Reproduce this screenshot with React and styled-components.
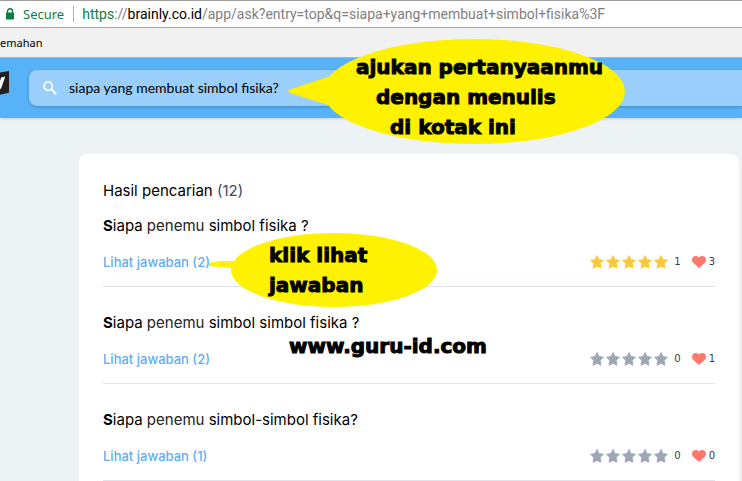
import styled, { createGlobalStyle } from 'styled-components';
import { useState } from 'react';

const results = [
	{ id: 1, subject: 'simbol fisika ?', answers: 2, rated: true, votes: 1, thanks: 3 },
	{ id: 2, subject: 'simbol simbol fisika ?', answers: 2, rated: false, votes: 0, thanks: 1 },
	{ id: 3, subject: 'simbol-simbol fisika?', answers: 1, rated: false, votes: 0, thanks: 0 },
]

function LockIcon() {
	return (
		<svg width="10" height="12" viewBox="0 0 10 12" aria-hidden="true">
			<path d="M2.5 5V3.2a2.5 2.4 0 0 1 5 0V5" fill="none" stroke="#0b8043" strokeWidth="1.4" />
			<rect x="1" y="4.5" width="8" height="7" rx="0.6" fill="#0b8043" />
		</svg>
	)
}

function SearchIcon() {
	return (
		<svg width="14" height="14" viewBox="0 0 14 14" aria-hidden="true">
			<circle cx="5.2" cy="5.2" r="4.2" fill="none" stroke="#fff" strokeWidth="1.7" />
			<path d="M8.3 8.3L13.2 13.2" stroke="#fff" strokeWidth="2" />
		</svg>
	)
}

function Logo() {
	return (
		<svg width="9" height="25" viewBox="0 0 9 25" aria-hidden="true">
			<path d="M0 2.6L9 1V22.8L0 24.8Z" fill="#231f20" />
			<path d="M0 11L1.2 7.4L5.2 6.6L2 16Q1.2 19 0 19.6Z" fill="#fff" />
		</svg>
	)
}

function Star() {
	return (
		<svg width="14" height="14" viewBox="0 0 14 14" aria-hidden="true">
			<path
				d="M7 0.6L9 4.6L13.4 5.2L10.2 8.4L11 13.2L7 11.4L3 13.2L3.8 8.4L0.6 5.2L5 4.6Z"
				fill="currentColor" stroke="currentColor" strokeWidth="0.9" strokeLinejoin="round"
			/>
		</svg>
	)
}

function Heart() {
	return (
		<svg width="14" height="12" viewBox="0 0 14 12" aria-hidden="true">
			<path
				d="M7 12L1.2 6.8C-0.3 5.3-0.3 2.4 1 1.1C2.7-0.5 5.5-0.3 7 1.5C8.5-0.3 11.3-0.5 13 1.1C14.3 2.4 14.3 5.3 12.8 6.8Z"
				fill="#ff796b"
			/>
		</svg>
	)
}

function Result({ result }) {
	return (
		<Item>
			<Question>
				<b>S</b>iapa <span>penemu</span> {result.subject}
			</Question>
			<Meta>
				<AnswerLink href="#">Lihat jawaban ({result.answers})</AnswerLink>
				<Rating>
					<Stars $rated={result.rated}>
						{[0, 1, 2, 3, 4].map((i) => <Star key={i} />)}
					</Stars>
					<Count>{result.votes}</Count>
					<Thanks>
						<Heart />
						<Count>{result.thanks}</Count>
					</Thanks>
				</Rating>
			</Meta>
		</Item>
	)
}

function App() {

	const [query, setQuery] = useState('siapa yang membuat simbol fisika?')

	return (
		<Page>
			<GlobalStyle />
			<AddressBar>
				<Secure><LockIcon />Secure</Secure>
				<Url><em>https</em>://<b>brainly.co.id</b>/app/ask?entry=top&amp;q=siapa+yang+membuat+simbol+fisika%3F</Url>
			</AddressBar>
			<Bookmarks>emahan</Bookmarks>
			<Header>
				<Logo />
				<SearchBox>
					<SearchIcon />
					<SearchInput
						type="text"
						aria-label="Cari"
						value={query}
						onChange={(e) => setQuery(e.target.value)}
					/>
				</SearchBox>
			</Header>
			<Card>
				<Title>Hasil pencarian <span>(12)</span></Title>
				<List>
					{results.map((result) => <Result result={result} key={result.id} />)}
				</List>
			</Card>

			{/* notes drawn over the page */}
			<Note $x={288} $y={39}>
				<svg width="338" height="105" viewBox="0 0 338 105" aria-hidden="true">
					<ellipse cx="186" cy="52.5" rx="151" ry="52.5" fill="#fff200" />
					<path d="M0 51L52 34L80 52L50 69L2 54Z" fill="#fff200" />
				</svg>
				<NoteText $left={68} $top={13}>
					<NoteLine>ajukan pertanyaanmu</NoteLine>
					<NoteLine $indent={20}>dengan menulis</NoteLine>
					<NoteLine $indent={34}>di kotak ini</NoteLine>
				</NoteText>
			</Note>
			<Note $x={209} $y={233}>
				<svg width="229" height="74" viewBox="0 0 229 74" aria-hidden="true">
					<ellipse cx="125" cy="37" rx="103" ry="37" fill="#fff200" />
					<path d="M0 30L10 28H28L40 35H22L0 33Z" fill="#fff200" />
				</svg>
				<NoteText $left={60} $top={7}>
					<NoteLine>klik lihat</NoteLine>
					<NoteLine>jawaban</NoteLine>
				</NoteText>
			</Note>
			<Note $x={289} $y={331}>
				<NoteLine>www.guru-id.com</NoteLine>
			</Note>
		</Page>
	)
}

const GlobalStyle = createGlobalStyle`
	* {
		box-sizing: border-box;
	}
	body {
		margin: 0;
		background: #edf2f5;
		font-family: Inter, "Liberation Sans", sans-serif;
		color: #000;
	}
	svg {
		display: block;
		flex: none;
	}
`

const Page = styled.div`
	position: relative;
	min-height: 100vh;
	overflow: hidden;
`

const AddressBar = styled.div`
	display: flex;
	align-items: center;
	height: 28px;
	padding-left: 5px;
	background: #fff;
	border-top: 1px solid #a0a0a0;
	border-bottom: 1px solid #a6a6a6;
	font-family: "Noto Sans", "Open Sans", sans-serif;
	font-size: 13px;
	white-space: nowrap;
`

const Secure = styled.div`
	display: flex;
	align-items: center;
	gap: 8px;
	padding-right: 9px;
	border-right: 1px solid #b0b0b0;
	line-height: 16px;
	color: #0b8043;
`

const Url = styled.div`
	padding-left: 8px;
	font-family: Roboto, "Noto Sans", sans-serif;
	font-size: 14px;
	color: #808080;

	em {
		font-style: normal;
		color: #0b8043;
	}
	b {
		font-weight: 400;
		color: #000;
	}
`

const Bookmarks = styled.div`
	height: 30px;
	background: #f1f1f1;
	border-bottom: 1px solid #b8bcc0;
	font-family: "Noto Sans", "Open Sans", sans-serif;
	font-size: 11px;
	line-height: 30px;
`

const Header = styled.header`
	display: flex;
	gap: 20px;
	padding: 12px 0;
	background: #57b2f8;
	box-shadow: 0 1px 3px rgba(0, 0, 0, 0.15);
`

const SearchBox = styled.div`
	display: flex;
	flex: 1;
	align-items: center;
	gap: 12px;
	height: 36px;
	padding-left: 14px;
	background: #99cffa;
	border-radius: 8px 0 0 8px;
	box-shadow: 0 1px 3px rgba(0, 0, 0, 0.25);
`

const SearchInput = styled.input`
	flex: 1;
	min-width: 0;
	padding: 0;
	border: 0;
	outline: 0;
	background: none;
	font: 400 14px/20px Lato, "Liberation Sans", sans-serif;
	color: #000;
`

const Card = styled.main`
	margin: 36px 3px 0 79px;
	padding: 24px;
	background: #fff;
	border-radius: 8px;
`

const Title = styled.h1`
	margin: 0 0 11px;
	font-size: 15px;
	font-weight: 400;
	line-height: 25px;

	span {
		color: #3c4859;
	}
`

const List = styled.ul`
	margin: 0;
	padding: 0;
	list-style: none;
`

const Item = styled.li`
	padding: 24px 0 14px;
	border-bottom: 1px solid #dfe5eb;

	&:first-child {
		padding-top: 0;
	}
`

const Question = styled.h2`
	margin: 0 0 14px;
	font-size: 15px;
	font-weight: 400;
	line-height: 24px;

	span {
		color: #222;
	}
`

const Meta = styled.div`
	display: flex;
	align-items: center;
	justify-content: space-between;
	height: 20px;
`

const AnswerLink = styled.a`
	font-size: 13px;
	font-weight: 500;
	line-height: 20px;
	color: #61adf3;
	text-decoration: none;
`

const Rating = styled.div`
	display: flex;
	align-items: center;
	gap: 6px;
`

const Stars = styled.div`
	display: flex;
	gap: 2px;
	color: ${(props) => (props.$rated ? '#fec83c' : '#9fa7b7')};
`

const Count = styled.span`
	font-family: "DejaVu Sans", sans-serif;
	font-size: 10px;
	line-height: 12px;
	color: #333c48;
`

const Thanks = styled.div`
	display: flex;
	align-items: center;
	gap: 3px;
	margin-left: 5px;
`

const Note = styled.div`
	position: absolute;
	left: ${(props) => props.$x}px;
	top: ${(props) => props.$y}px;
	pointer-events: none;
`

const NoteText = styled.div`
	position: absolute;
	left: ${(props) => props.$left}px;
	top: ${(props) => props.$top}px;
`

const NoteLine = styled.p`
	margin: 0;
	padding-left: ${(props) => props.$indent || 0}px;
	font-family: "DejaVu Sans", "Liberation Sans", sans-serif;
	font-size: 20px;
	font-weight: 700;
	line-height: 30px;
	white-space: nowrap;
	-webkit-text-stroke: 1px #000;
`

export default App;
